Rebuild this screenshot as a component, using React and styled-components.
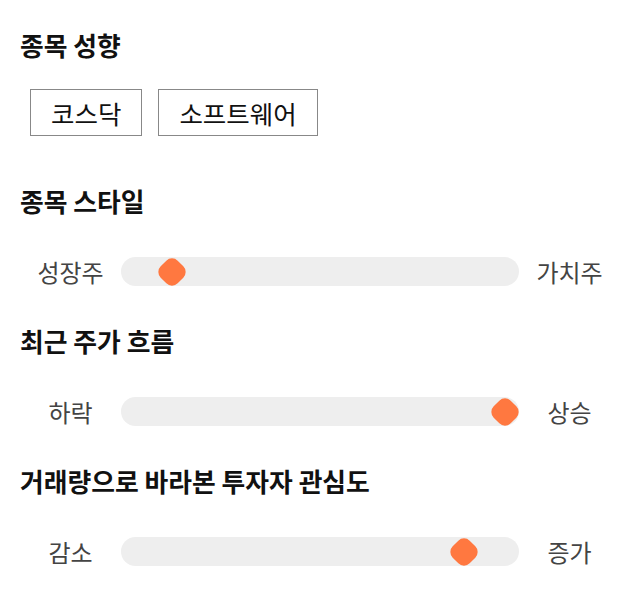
import React from "react";
import styled, { createGlobalStyle } from "styled-components";

const GlobalStyle = createGlobalStyle`
  body {
    margin: 0;
    background: #fff;
    font-family: "Noto Sans CJK KR", "Noto Sans", sans-serif;
  }
`;

const sliders = [
  { title: "종목 스타일", left: "성장주", right: "가치주", value: 0.1 },
  { title: "최근 주가 흐름", left: "하락", right: "상승", value: 1 },
  { title: "거래량으로 바라본 투자자 관심도", left: "감소", right: "증가", value: 0.89 },
];

export default function App() {
  return (
    <Page>
      <GlobalStyle />
      <Section gap={29} bottom={50}>
        <Title>종목 성향</Title>
        <Tags>
          <Tag>코스닥</Tag>
          <Tag>소프트웨어</Tag>
        </Tags>
      </Section>
      {sliders.map((s) => (
        <Section key={s.title} gap={38} bottom={42}>
          <Title>{s.title}</Title>
          <SliderRow>
            <Label>{s.left}</Label>
            <Track>
              <Thumb style={{ left: `calc(14px + (100% - 28px) * ${s.value})` }} />
            </Track>
            <Label>{s.right}</Label>
          </SliderRow>
        </Section>
      ))}
    </Page>
  );
}

const Page = styled.div`
  padding: 30px 20px 20px 20px;
`;

const Section = styled.section`
  display: flex;
  flex-direction: column;
  gap: ${(p) => p.gap}px;
  margin-bottom: ${(p) => p.bottom}px;
`;

const Title = styled.h2`
  margin: 0;
  font-size: 25.8px;
  line-height: 30px;
  font-weight: 700;
  color: #111;
`;

const Tags = styled.div`
  display: flex;
  gap: 16px;
  padding-left: 10px;
`;

const Tag = styled.div`
  height: 47px;
  box-sizing: border-box;
  padding: 0 20px;
  border: 1px solid #888;
  display: flex;
  align-items: center;
  font-size: 25.5px;
  color: #111;
`;

const SliderRow = styled.div`
  display: grid;
  grid-template-columns: 101px 1fr 101px;
  align-items: center;
  height: 30px;
`;

const Label = styled.span`
  text-align: center;
  font-size: 24px;
  color: #444;
`;

const Track = styled.div`
  position: relative;
  height: 29px;
  border-radius: 15px;
  background: #eeeeee;
`;

const Thumb = styled.div`
  position: absolute;
  top: 50%;
  width: 24px;
  height: 24px;
  border-radius: 8px;
  background: #ff7840;
  transform: translate(-50%, -50%) rotate(45deg);
`;
